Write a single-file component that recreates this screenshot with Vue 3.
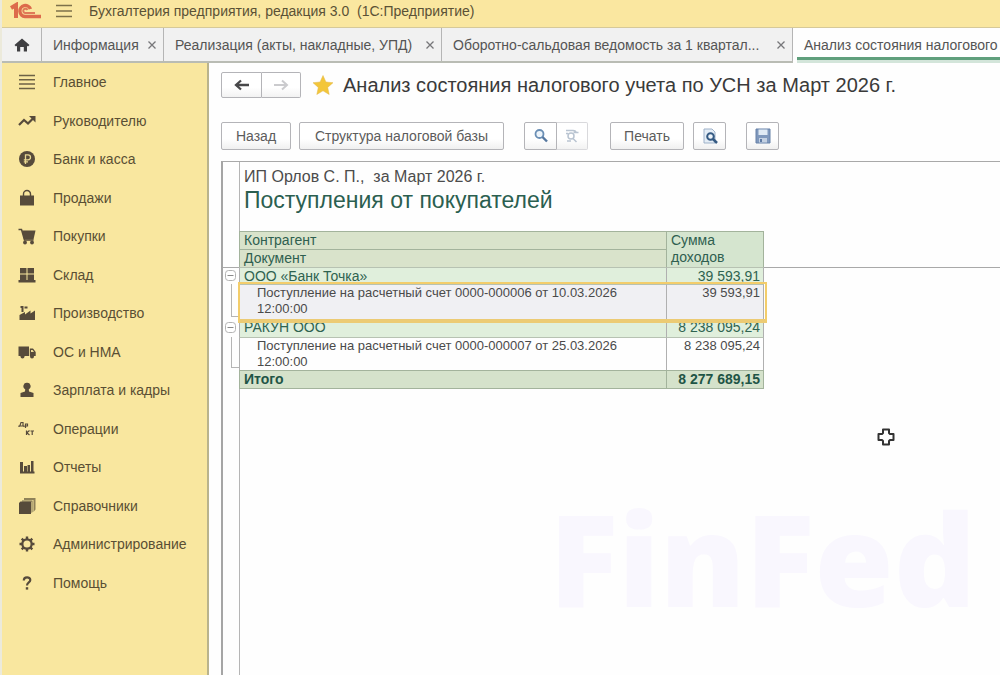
<script setup>
import { ref } from 'vue'

const tabs = [
  { title: 'Информация', size: 'small' },
  { title: 'Реализация (акты, накладные, УПД)', size: 'medium' },
  { title: 'Оборотно-сальдовая ведомость за 1 квартал...', size: 'large' },
]

const sections = [
  { icon: 'lines', title: 'Главное' },
  { icon: 'trend', title: 'Руководителю' },
  { icon: 'ruble', title: 'Банк и касса' },
  { icon: 'bag', title: 'Продажи' },
  { icon: 'cart', title: 'Покупки' },
  { icon: 'store', title: 'Склад' },
  { icon: 'factory', title: 'Производство' },
  { icon: 'truck', title: 'ОС и НМА' },
  { icon: 'person', title: 'Зарплата и кадры' },
  { icon: 'entries', title: 'Операции' },
  { icon: 'chart', title: 'Отчеты' },
  { icon: 'books', title: 'Справочники' },
  { icon: 'gear', title: 'Администрирование' },
  { icon: 'help', title: 'Помощь' },
]

const rows = [
  { kind: 'group', title: 'ООО «Банк Точка»', sum: '39 593,91' },
  { kind: 'doc', title: 'Поступление на расчетный счет 0000-000006 от 10.03.2026 12:00:00', sum: '39 593,91' },
  { kind: 'group', title: 'РАКУН ООО', sum: '8 238 095,24' },
  { kind: 'doc', title: 'Поступление на расчетный счет 0000-000007 от 25.03.2026 12:00:00', sum: '8 238 095,24' },
  { kind: 'total', title: 'Итого', sum: '8 277 689,15' },
]

const selected = ref(1)
</script>

<template>
  <div class="app">
    <header class="titlebar">
      <svg class="logo" viewBox="0 0 32 18" role="img" aria-label="1С">
        <path d="M1 6 L6 3 V16" fill="none" stroke="#dd6b4b" stroke-width="4" />
        <path d="M20.500 7 A5.500 5.500 0 1 0 15 14.500 H31" fill="none" stroke="#dd6b4b" stroke-width="3.400" />
        <path d="M17.500 8 A2.200 2.200 0 1 0 15 11 H25" fill="none" stroke="#e07a58" stroke-width="2" />
      </svg>
      <button class="burger" aria-label="Главное меню">
        <svg viewBox="0 0 16 14"><path d="M0 1.500H16M0 7H16M0 12.500H16" stroke="#7d714a" stroke-width="1.500" /></svg>
      </button>
      <span class="app-name">Бухгалтерия предприятия, редакция 3.0&nbsp; (1С:Предприятие)</span>
    </header>

    <nav class="tabs" aria-label="Открытые окна">
      <button class="home" aria-label="Начальная страница">
        <svg viewBox="0 0 16 14"><path d="M8 0.500 L15.500 7 L14 8.500 L13 7.700 V13.500 H9.800 V9 H6.200 V13.500 H3 V7.700 L2 8.500 L0.500 7 Z" fill="#3f3f42" /></svg>
      </button>
      <div v-for="tab in tabs" :key="tab.title" class="tab" :class="tab.size">
        <a href="#">{{ tab.title }}</a>
        <button class="close" aria-label="Закрыть">
          <svg viewBox="0 0 8 8"><path d="M0.500 0.500 L7.500 7.500 M7.500 0.500 L0.500 7.500" stroke="#77777a" stroke-width="1.300" /></svg>
        </button>
      </div>
      <div class="tab active"><a href="#" aria-current="page">Анализ состояния налогового</a></div>
    </nav>

    <div class="body">
      <aside class="sidebar">
        <a v-for="s in sections" :key="s.title" href="#" class="section">
          <svg class="section-icon" viewBox="0 0 18 18" fill="#574b3b" stroke="none">
            <path v-if="s.icon === 'lines'" d="M1 2.500H17M1 6.800H17M1 11.100H17M1 15.500H17" stroke="#6d6245" stroke-width="1.500" />
            <g v-else-if="s.icon === 'trend'">
              <path d="M1 13 L6 8 L10 11.500 L15 6.500" fill="none" stroke="#574b3b" stroke-width="2.200" />
              <path d="M11 4H17.500V10.500Z" />
            </g>
            <g v-else-if="s.icon === 'ruble'">
              <circle cx="9" cy="9" r="8" />
              <path d="M7.500 14V4.800H10A2.500 2.500 0 0 1 10 9.800H5.800M5.800 11.900H10" fill="none" stroke="#e9d892" stroke-width="1.300" />
            </g>
            <g v-else-if="s.icon === 'bag'">
              <path d="M2 6.500H16V16.500H2Z" />
              <path d="M5.500 7V5A3.500 3.500 0 0 1 12.500 5V7" fill="none" stroke="#574b3b" stroke-width="1.400" />
            </g>
            <g v-else-if="s.icon === 'cart'">
              <path d="M4 3.500H17.500L15.500 12.500H6Z" />
              <path d="M0.500 2.500H3.500L6.500 13H15.500" fill="none" stroke="#574b3b" stroke-width="1.500" />
              <circle cx="7" cy="15.500" r="1.900" /><circle cx="14" cy="15.500" r="1.900" />
            </g>
            <path v-else-if="s.icon === 'store'" d="M2 2H8.500V7.500H2ZM9.500 2H16V7.500H9.500ZM2 8.500H8.500V14H2ZM9.500 8.500H16V14H9.500ZM0.500 14H17.500V16.500H0.500Z" />
            <path v-else-if="s.icon === 'factory'" d="M1.500 16V11L7 8V10.500L12.500 6.500V9.500L17 6.500V16ZM2.500 2H5.500V4H2.500ZM6.500 2.500H9.500V4.500H6.500ZM3.500 4H5.500V8H3.500Z" />
            <g v-else-if="s.icon === 'truck'">
              <path d="M0.500 3.500H11V13H0.500ZM11.800 5.500H15L17.700 9V13H11.800Z" />
              <path d="M13 7H14.600L16 9H13Z" fill="#eedc96" />
              <circle cx="4.500" cy="13.500" r="2" /><circle cx="14" cy="13.500" r="2" />
            </g>
            <path v-else-if="s.icon === 'person'" d="M9 1.800A3.400 3.400 0 0 1 10.800 8.200L11 10.500L15.500 12V16H2.500V12L7 10.500L7.200 8.200A3.400 3.400 0 0 1 9 1.800Z" />
            <g v-else-if="s.icon === 'entries'" fill="none" stroke="#574b3b" stroke-width="1.200">
              <path d="M1 7V6H1.800L3 2.500H5V6H6V7M1.800 6H5M7.500 8V4H9.500V6H7.500" />
              <path d="M8.500 10.500V15M11.500 10.500L8.800 12.700L11.500 15M12.500 11H16M14.200 11V15" />
            </g>
            <path v-else-if="s.icon === 'chart'" d="M2 4H5V14H2ZM6 8H9V14H6ZM9.500 7H12V14H9.500ZM13 3H15.500V14H13ZM2 13.500H16.500V15.500H2Z" />
            <g v-else-if="s.icon === 'books'">
              <path d="M6 1H17.500V12.500L15.500 15V3H6Z" fill="#8f8259" />
              <path d="M4 3.500H14.500V15L13.500 16V4.500H4Z" fill="#756a4c" />
              <path d="M1 6L2.500 4.500H13V17H1Z" />
            </g>
            <g v-else-if="s.icon === 'gear'">
              <circle cx="9" cy="9" r="4.700" fill="none" stroke="#574b3b" stroke-width="2.300" />
              <path d="M9 1.500V4M9 14V16.500M1.500 9H4M14 9H16.500M3.700 3.700L5.500 5.500M12.500 12.500L14.300 14.300M14.300 3.700L12.500 5.500M5.500 12.500L3.700 14.300" stroke="#574b3b" stroke-width="2.400" />
            </g>
            <g v-else>
              <path d="M5.800 6.500C5.800 2.300 12.300 2.500 12.300 6C12.300 8.500 9 8.300 9 11.500" fill="none" stroke="#574b3b" stroke-width="2.200" />
              <path d="M7.800 13.200H10.200V15.600H7.800Z" />
            </g>
          </svg>
          <span>{{ s.title }}</span>
        </a>
      </aside>

      <main class="page">
        <div class="heading">
          <div class="pair history">
            <button aria-label="Назад">
              <svg class="arrow" viewBox="0 0 16 12"><path d="M15 6H3M7 1.500L2 6L7 10.500" fill="none" stroke="#48484a" stroke-width="2.300" /></svg>
            </button>
            <button aria-label="Вперед" disabled>
              <svg class="arrow" viewBox="0 0 16 12"><path d="M1 6H13M9 1.500L14 6L9 10.500" fill="none" stroke="#cbcbce" stroke-width="2" /></svg>
            </button>
          </div>
          <button class="star" aria-label="В избранное">
            <svg viewBox="0 0 20 20"><path d="M10 0.500L12.900 7L20 7.700L14.700 12.400L16.200 19.500L10 15.800L3.800 19.500L5.300 12.400L0 7.700L7.100 7Z" fill="#f3c63a" stroke="#e2b84a" stroke-width="0.500" /></svg>
          </button>
          <h1>Анализ состояния налогового учета по УСН за Март 2026 г.</h1>
        </div>

        <div class="toolbar">
          <button class="btn back">Назад</button>
          <button class="btn structure">Структура налоговой базы</button>
          <div class="pair find">
            <button aria-label="Найти">
              <svg class="glyph" viewBox="0 0 16 16"><circle cx="6.500" cy="6" r="4" fill="#edf4fa" stroke="#6b8fb5" stroke-width="1.800" /><path d="M9.500 9L14 13.500" stroke="#56789f" stroke-width="2.400" /></svg>
            </button>
            <button aria-label="Отменить поиск" disabled>
              <svg class="glyph" viewBox="0 0 16 16"><g fill="none" stroke="#b9c4d1" stroke-width="1.500"><circle cx="7" cy="8" r="3" /><path d="M9 10.500L12.500 14M2 2.500H9Q12 2.500 12 5M9.500 4.500H14.500M2 5.500H4M3 13H7" /></g></svg>
            </button>
          </div>
          <button class="btn print">Печать</button>
          <button class="btn square preview" aria-label="Предварительный просмотр">
            <svg class="glyph" viewBox="0 0 16 16"><path d="M2 1H10L13 4V15H2Z" fill="#e4edf6" stroke="#9eb1c8" /><circle cx="8.500" cy="8.500" r="3.300" fill="#edf4fa" stroke="#355a83" stroke-width="2" /><path d="M11 11L15 15" stroke="#355a83" stroke-width="2.500" /></svg>
          </button>
          <button class="btn square save" aria-label="Сохранить">
            <svg class="glyph" viewBox="0 0 16 16"><path d="M1 1H15V15H1Z" fill="#8099bd" stroke="#6681a8" /><path d="M3.500 1.500H12.500V7H3.500Z" fill="#e0eaf4" /><path d="M4 10H12V14.500H4Z" fill="#c4d1e2" /><path d="M5 11H7V14H5Z" fill="#5f7ba4" /></svg>
          </button>
        </div>

        <section class="sheet">
          <p class="org">ИП Орлов С. П.,&nbsp; за Март 2026 г.</p>
          <h2>Поступления от покупателей</h2>
          <table>
            <colgroup>
              <col class="c-tree" /><col class="c-name" /><col class="c-sum" /><col />
            </colgroup>
            <thead>
              <tr>
                <td></td>
                <th scope="col">Контрагент</th>
                <th scope="col" rowspan="2" class="sum-head">Сумма доходов</th>
                <td></td>
              </tr>
              <tr>
                <td class="freeze"></td>
                <th scope="col">Документ</th>
                <td class="freeze"></td>
              </tr>
            </thead>
            <tbody>
              <tr v-for="(row, i) in rows" :key="i" :class="[row.kind, { selected: i === selected }]">
                <td class="tree">
                  <button v-if="row.kind === 'group'" aria-label="Свернуть группу">
                    <svg viewBox="0 0 11 11"><rect x="0.500" y="0.500" width="10" height="10" rx="3" fill="#fff" stroke="#b3b3b3" /><path d="M2.500 5.500H8.500" stroke="#8a8a8a" /></svg>
                  </button>
                </td>
                <td class="name" @click="selected = i">{{ row.title }}</td>
                <td class="sum">{{ row.sum }}</td>
                <td></td>
              </tr>
            </tbody>
          </table>
          <svg class="pointer" viewBox="0 0 18 18" aria-hidden="true"><path d="M6 1.500H12V5L13 6H16.500V12H13L12 13V16.500H6V13L5 12H1.500V6H5L6 5Z" fill="#fff" stroke="#333" stroke-width="2" stroke-linejoin="round" /></svg>
          <div class="watermark">FinFed</div>
        </section>
      </main>
    </div>
  </div>
</template>

<style>
body {
  margin: 0;
  background: #fefefe;
}
</style>

<style scoped>
.app {
  display: flex;
  flex-direction: column;
  min-height: 100vh;
  box-sizing: border-box;
  border-left: 2px solid #eceadb;
  overflow: hidden;
  font-family: "Liberation Sans", Arial, sans-serif;
  font-size: 14px;
  color: #4c4c4c;
}
button {
  margin: 0;
  padding: 0;
  border: 0;
  background: none;
  font: inherit;
  color: inherit;
}
a {
  color: inherit;
  text-decoration: none;
}
svg {
  display: block;
}

.titlebar {
  display: flex;
  align-items: center;
  height: 28px;
  padding: 0 8px 5px;
  box-sizing: border-box;
  background: #fae7a0;
  border-bottom: 1px solid #d6c999;
  color: #5a5136;
}
.logo {
  width: 32px;
  height: 18px;
}
.burger {
  margin: 0 17px 0 14px;
}
.burger svg {
  width: 16px;
  height: 14px;
}

.tabs {
  display: flex;
  height: 35px;
  box-sizing: border-box;
  background: #f1f1f1;
  border-bottom: 2px solid #b9bcb4;
  color: #555;
}
.home {
  display: flex;
  align-items: center;
  justify-content: center;
  flex: none;
  width: 40px;
  box-sizing: border-box;
  border-right: 1px solid #b5b5b5;
}
.home svg {
  width: 16px;
  height: 14px;
}
.tab {
  display: flex;
  flex: none;
  align-items: center;
  justify-content: space-between;
  box-sizing: border-box;
  padding: 0 7px 0 11px;
  border-right: 1px solid #b5b5b5;
  white-space: nowrap;
}
.small {
  width: 122px;
}
.medium {
  width: 278px;
}
.large {
  width: 351px;
}
.close svg {
  width: 8px;
  height: 8px;
}
.active {
  flex: 1;
  min-width: 0;
  margin-bottom: -2px;
  padding: 0 0 2px 11px;
  border-right: 0;
  background: linear-gradient(#d3e5da, #d3e5da) 4px 100% / 100% 3px no-repeat,
    linear-gradient(#5f9f7c, #5f9f7c) 4px calc(100% - 3px) / 100% 3px no-repeat, #fefefe;
  overflow: hidden;
}

.body {
  display: flex;
  flex: 1;
}
.sidebar {
  flex: none;
  width: 207px;
  box-sizing: border-box;
  border-right: 2px solid #b9b38c;
  background: #f9e79f;
  color: #5a4f34;
}
.section {
  display: flex;
  align-items: center;
  gap: 17px;
  height: 38px;
  padding-left: 16px;
}
.section:nth-child(even) {
  height: 39px;
}
.section-icon {
  width: 18px;
  height: 18px;
}

.page {
  display: flex;
  flex: 1;
  flex-direction: column;
  min-width: 0;
  padding-left: 12px;
}
.heading {
  display: flex;
  align-items: center;
  height: 24px;
  margin-top: 10px;
}
.pair {
  display: flex;
}
.pair button {
  display: flex;
  align-items: center;
  justify-content: center;
  box-sizing: border-box;
  height: 28px;
  border: 1px solid #b4b4b8;
  background: linear-gradient(#fff 60%, #f2f2f2);
}
.pair button:first-child {
  border-radius: 2px 0 0 2px;
}
.pair button:last-child {
  border-left: 0;
  border-radius: 0 2px 2px 0;
}
.history button {
  width: 41px;
  height: 26px;
}
.history button:last-child {
  width: 39px;
}
.arrow {
  width: 16px;
  height: 12px;
}
.star {
  margin: 0 10px 0 12px;
}
.star svg {
  width: 20px;
  height: 20px;
}
h1 {
  margin: 0;
  font-size: 20px;
  font-weight: 400;
  line-height: 24px;
  color: #3a3a3a;
  white-space: nowrap;
}

.toolbar {
  display: flex;
  margin-top: 25px;
}
.btn {
  display: flex;
  align-items: center;
  justify-content: center;
  height: 28px;
  box-sizing: border-box;
  border: 1px solid #b4b4b8;
  border-radius: 2px;
  background: linear-gradient(#fff 60%, #f0f0f0);
  color: #5c5c5c;
  white-space: nowrap;
}
.back {
  width: 70px;
}
.structure {
  width: 205px;
  margin-left: 8px;
}
.find {
  margin-left: 20px;
}
.find button {
  width: 33px;
}
.find button:last-child {
  width: 31px;
  border-color: #d9d9dc;
}
.print {
  width: 74px;
  margin-left: 22px;
}
.square {
  width: 33px;
}
.preview {
  margin-left: 9px;
}
.save {
  margin-left: 20px;
}
.glyph {
  width: 16px;
  height: 16px;
}

.sheet {
  position: relative;
  flex: 1;
  margin-top: 11px;
  border-top: 1px solid #a9a9a9;
  border-left: 2px solid #a5a5a5;
}
.sheet::before {
  content: "";
  position: absolute;
  top: 0;
  bottom: 0;
  left: 16px;
  border-left: 1px solid #b5b5b5;
}
.org {
  margin: 6px 0 0 21px;
  font-size: 16px;
  line-height: 18px;
}
h2 {
  margin: 1px 0 17px 21px;
  font-size: 23px;
  font-weight: 400;
  line-height: 27px;
  color: #2b5f50;
}
table {
  position: relative;
  width: 100%;
  table-layout: fixed;
  border-collapse: separate;
  border-spacing: 0;
}
.c-tree {
  width: 16px;
}
.c-name {
  width: 427px;
}
.c-sum {
  width: 98px;
}
th,
td {
  box-sizing: border-box;
  padding: 0;
  line-height: 16px;
  vertical-align: top;
}
th {
  height: 18px;
  padding-left: 4px;
  border-top: 1px solid #a3b39c;
  border-left: 1px solid #a3b39c;
  background: #d9e3cb;
  font-weight: 400;
  text-align: left;
  color: #2f5f50;
  line-height: 17px;
}
.sum-head {
  border-right: 1px solid #a3b39c;
  background: #d5e5cf;
}
.freeze {
  box-shadow: 0 1px 0 #a9a9a9;
}
.name {
  padding-left: 4px;
  border-top: 1px solid #b7c2b2;
  border-left: 1px solid #b0b0b0;
}
.sum {
  padding-right: 3px;
  border-top: 1px solid #b7c2b2;
  border-left: 1px solid #b0b0b0;
  border-right: 1px solid #b0b0b0;
  text-align: right;
}
.group .name,
.group .sum {
  background: #e0efdc;
  color: #2f6350;
}
.doc .name {
  padding-left: 17px;
  padding-right: 40px;
}
.doc .name,
.doc .sum {
  font-size: 13px;
  color: #4a4a4a;
}
.total .name,
.total .sum {
  height: 19px;
  border-color: #a3b39c;
  border-bottom: 1px solid #a3b39c;
  background: #d5e2cb;
  color: #1f5546;
  font-weight: 700;
}
.tree {
  position: relative;
}
.group .tree button {
  position: absolute;
  top: 3px;
  right: 3px;
}
.group .tree svg {
  width: 11px;
  height: 11px;
}
.doc .tree::before {
  content: "";
  position: absolute;
  top: 0;
  bottom: 2px;
  left: 8px;
  right: 0;
  border-left: 1px solid #b5b5b5;
  border-bottom: 1px solid #b5b5b5;
}
.selected .name,
.selected .sum {
  padding-bottom: 2px;
  background: #f0f0f3;
}
.selected + .group .name,
.selected + .group .sum {
  height: 18px;
  line-height: 15px;
}
.selected .name {
  position: relative;
  z-index: 1;
}
.selected .name::after {
  content: "";
  position: absolute;
  top: -3px;
  bottom: -4px;
  left: -2px;
  right: -101px;
  border: 2px solid #f3cd6b;
  border-bottom: 4px solid #eccb74;
  pointer-events: none;
}
.pointer {
  position: absolute;
  top: 266px;
  left: 654px;
  width: 18px;
  height: 18px;
}
.watermark {
  position: absolute;
  right: 24px;
  bottom: 30px;
  font-family: "Open Sans", sans-serif;
  font-size: 128px;
  font-weight: 800;
  line-height: 174px;
  color: #f9f7fe;
}
</style>
